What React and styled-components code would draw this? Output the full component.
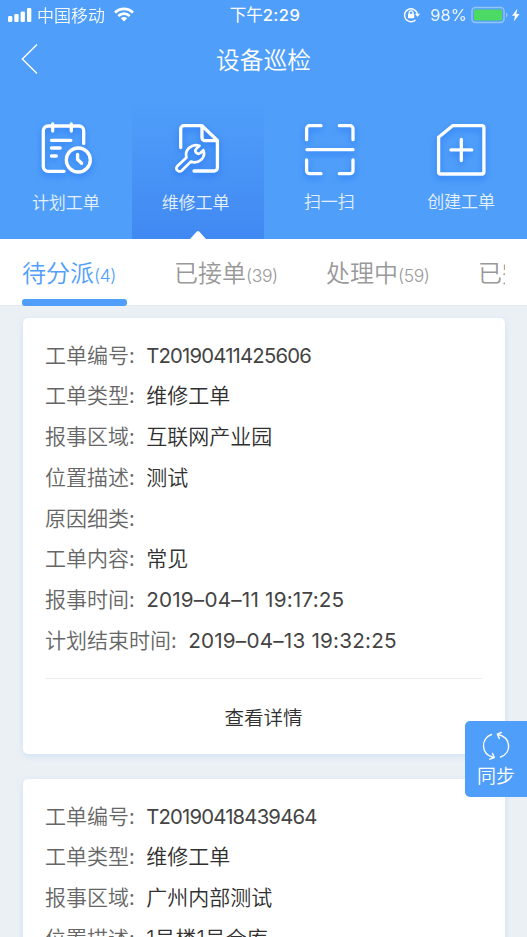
import React from 'react';
import styled, { createGlobalStyle } from 'styled-components';

const GlobalStyle = createGlobalStyle`
	* {
		box-sizing: border-box;
	}
	body {
		margin: 0;
		background: #ebf0f5;
		font-family: "Noto Sans CJK SC", sans-serif;
		font-weight: 350;
	}
`;
const Screen = styled.div`
	position: relative;
	width: 527px;
	height: 937px;
	overflow: hidden;
	background: #ebf0f5;
`;
const Header = styled.header`
	height: 239px;
	background: #4f9efa;
	color: #fff;
`;
const StatusBar = styled.div`
	display: grid;
	grid-template-columns: 1fr auto 1fr;
	align-items: center;
	height: 28px;
	padding: 0 7px 0 8px;
	font-size: 17px;
	line-height: 28px;
`;
const StatusGroup = styled.div`
	display: flex;
	align-items: center;
	justify-content: ${props => props.$end ? 'flex-end' : 'flex-start'};
	height: 28px;
`;
const Carrier = styled.span`
	margin: 0 9px 0 5px;
	opacity: 0.95;
`;
const Time = styled.span`
	padding-left: 2px;
	font-size: 16.5px;
	font-weight: 400;
`;
const Clock = styled.span`
	font-family: Inter, sans-serif;
	font-weight: 500;
	letter-spacing: 0.5px;
`;
const Percent = styled.span`
	margin: 0 4px 0 9px;
	font-family: Inter, sans-serif;
	font-size: 16.5px;
	font-weight: 400;
	opacity: 0.9;
`;
const NavBar = styled.div`
	display: grid;
	grid-template-columns: 60px 1fr 60px;
	align-items: center;
	height: 62px;
`;
const Back = styled.svg`
	margin-left: 20px;
`;
const Title = styled.h1`
	margin: 0;
	font-size: 23.7px;
	font-weight: 350;
	line-height: 62px;
	text-align: center;
`;
const Actions = styled.nav`
	display: grid;
	grid-template-columns: repeat(4, 1fr);
	height: 149px;
`;
const Action = styled.div`
	position: relative;
	display: flex;
	flex-direction: column;
	align-items: center;
	padding-top: 29px;
	background: ${props => props.$active ? 'linear-gradient(#4f9efa 8%, #4189f2)' : 'none'};
`;
const ActionLabel = styled.span`
	margin-top: ${props => props.$top}px;
	padding-right: ${props => props.$shift || 0}px;
	font-size: 17px;
	line-height: 24px;
	color: #e6f1ff;
`;
const Pointer = styled.svg`
	position: absolute;
	bottom: 0;
	left: 58px;
`;
const Glyph = styled.svg`
	width: 58px;
	height: 58px;
	overflow: visible;
	fill: none;
	stroke: #fff;
	stroke-width: 3.3;
	stroke-linecap: round;
	stroke-linejoin: round;
	filter: drop-shadow(0 3px 3px rgba(24, 108, 245, 0.65));
`;
const TabBar = styled.div`
	height: 67px;
	padding: 0 22px;
	background: #fff;
	border-bottom: 1px solid #e3e8ec;
`;
const TabList = styled.div`
	display: flex;
	gap: 47.5px;
	height: 67px;
	overflow: hidden;
`;
const Tab = styled.div`
	display: flex;
	flex-direction: column;
	flex: 0 0 104.5px;
	color: ${props => props.$active ? '#4f9efa' : '#999'};
`;
const TabText = styled.div`
	height: 60px;
	font-size: 24px;
	line-height: 66px;
	white-space: nowrap;
`;
const Underline = styled.div`
	height: 7px;
	border-radius: 3px;
	background: #4f9efa;
`;
const Count = styled.span`
	font-family: Inter, sans-serif;
	font-size: 17.5px;
	font-weight: 350;
	letter-spacing: -0.4px;
`;
const List = styled.main`
	display: flex;
	flex-direction: column;
	gap: 25px;
	padding: 12px 22.5px 0;
`;
const Card = styled.section`
	height: 436px;
	flex-shrink: 0;
	padding: 15.5px 22.5px 0;
	border-radius: 5px;
	background: #fff;
	box-shadow: 0 2px 6px rgba(160, 200, 245, 0.35);
`;
const Row = styled.div`
	display: flex;
	align-items: baseline;
	height: 40.75px;
	font-size: 21px;
	line-height: 40.75px;
	white-space: nowrap;
`;
const Label = styled.span`
	margin-right: 11.5px;
	color: #666;
`;
const Value = styled.span`
	color: #303030;
	font-family: Inter, "Noto Sans CJK SC", sans-serif;
`;
const CodeValue = styled(Value)`
	color: #444;
	font-size: 20.3px;
	font-weight: 400;
	letter-spacing: -0.8px;
`;
const DateValue = styled(CodeValue)`
	font-size: 20.7px;
	letter-spacing: 0.2px;
`;
const Detail = styled.div`
	margin-top: 18px;
	border-top: 1px solid #ececec;
	color: #303030;
	font-size: 19.5px;
	line-height: 75px;
	text-align: center;
`;
const Sync = styled.div`
	position: absolute;
	top: 721px;
	right: 0;
	display: flex;
	flex-direction: column;
	align-items: center;
	width: 62px;
	height: 76px;
	padding-top: 10px;
	border-radius: 5px 0 0 5px;
	background: #4f9efa;
	color: #fff;
	font-size: 19px;
	line-height: 28px;
`;

const PlanIcon = () => <Glyph viewBox="0 0 58 58">
	<path d="M27 52.3H11a4.7 4.7 0 0 1-4.7-4.7V11.7A4.7 4.7 0 0 1 11 7h31a4.7 4.7 0 0 1 4.7 4.7V24.5M15.7 5v7M34.3 5v7M14.5 21.3h19.3M14.5 29h8.7M14.5 37h4.8"/>
	<circle cx="41.3" cy="41" r="12"/>
	<path d="M40.6 35.5v5l4 3.8"/>
</Glyph>;

const RepairIcon = () => <Glyph viewBox="0 0 58 58">
	<path d="M11.7 28.5V10a3.3 3.3 0 0 1 3.3-3.3h18L48.4 21.5V48.7a3.3 3.3 0 0 1-3.3 3.3H25M33 7v11.7a3 3 0 0 0 3 3h12"/>
	<path strokeWidth="2.7" d="M30.4 26.8C24.5 24.2 15 29.5 17.5 38.5L8.2 47.2C5.8 50.5 9.8 54 12.9 51.5L21.8 42.6C29 45.3 37.4 39.2 34.3 31.2L31.4 34C28.4 36.3 24.8 32.5 27.2 29.9Z"/>
</Glyph>;

const ScanIcon = () => <Glyph viewBox="0 0 58 58">
	<path d="M21 6.7H9.6a3 3 0 0 0-3 3v11M39.3 6.7H50a3 3 0 0 1 3 3v11M6.6 41v10.7a3 3 0 0 0 3 3H21M53 41v10.7a3 3 0 0 1-3 3H39.3M7 30.7h46"/>
</Glyph>;

const CreateIcon = () => <Glyph viewBox="0 0 58 58">
	<path d="M20.6 6.7H50a1.9 1.9 0 0 1 1.9 1.9V53a2 2 0 0 1-2 2H8.6a2 2 0 0 1-2-2V18.3ZM29.3 20.5v21M19 30.9h20.8"/>
</Glyph>;

const SignalIcon = () => <svg width="24" height="16" viewBox="0 0 24 16" fill="#fff">
	<rect x="0" y="9" width="4.3" height="6" rx="1.2"/>
	<rect x="6.3" y="7" width="4.3" height="8" rx="1.2"/>
	<rect x="12.6" y="4.5" width="4.3" height="10.5" rx="1.2"/>
	<rect x="19" y="1" width="4.3" height="14" rx="1.2"/>
</svg>;

const WifiIcon = () => <svg width="20" height="15" viewBox="0 0 20 15" fill="none" stroke="#fff" strokeWidth="2.6">
	<path d="M1 5.6C6 .6 14 .6 19 5.6M4.3 9c3.3-3.2 8.1-3.2 11.4 0"/>
	<path d="M6.8 11.3c1.9-1.6 4.5-1.6 6.4 0L10 14.5Z" fill="#fff" stroke="none"/>
</svg>;

const LockIcon = () => <svg width="18" height="16" viewBox="0 0 18 16" fill="none" stroke="#fff" strokeWidth="1.4">
	<path d="M12.5 13A6.5 6.5 0 1 1 14.4 7"/>
	<path d="M12 6.8h5l-2.5 3.3Z" fill="#fff" stroke="none"/>
	<path d="M6.2 7V5.7a1.9 1.9 0 0 1 3.8 0V7" strokeWidth="1.2"/>
	<rect x="5" y="6.8" width="6.2" height="4.4" rx=".7" fill="#fff" stroke="none"/>
</svg>;

const BatteryIcon = () => <svg width="49" height="18" viewBox="0 0 49 18">
	<rect x="1" y="1.5" width="32" height="15" rx="3.5" fill="none" stroke="#94c4fc" strokeWidth="1.5"/>
	<rect x="3" y="3.5" width="28" height="11" rx="1.5" fill="#4cd964"/>
	<path d="M35 6.5c2 .8 2 4.2 0 5Z" fill="#94c4fc"/>
	<path d="M46.5 2.5L41 9.8h3L42.8 15.5L48.5 8h-3.2Z" fill="#fff"/>
</svg>;

const SyncIcon = () => <svg width="30" height="30" viewBox="0 0 30 30" fill="none" stroke="#fff" strokeWidth="1.4" strokeLinecap="round" strokeLinejoin="round">
	<path d="M10.5 3.500C-.5 7.500 -.5 23 12.500 26.500M8.800 28.200l4.500-1.700-1.800-4M19.500 26C31 22 30.500 6.500 16.500 3.300M20.300 1.500l-4 1.700 2 4.200"/>
</svg>;

const actions = [
	{ label: '计划工单', icon: <PlanIcon/>, top: 13 },
	{ label: '维修工单', icon: <RepairIcon/>, top: 13, shift: 4, active: true },
	{ label: '扫一扫', icon: <ScanIcon/>, top: 12 },
	{ label: '创建工单', icon: <CreateIcon/>, top: 12 },
];

const tabs = [
	{ label: '待分派', count: 4, active: true },
	{ label: '已接单', count: 39 },
	{ label: '处理中', count: 59 },
	{ label: '已完成' },
];

const orders = [
	[
		['工单编号', 'T20190411425606', CodeValue],
		['工单类型', '维修工单'],
		['报事区域', '互联网产业园'],
		['位置描述', '测试'],
		['原因细类', ''],
		['工单内容', '常见'],
		['报事时间', '2019–04–11 19:17:25', DateValue],
		['计划结束时间', '2019–04–13 19:32:25', DateValue],
	],
	[
		['工单编号', 'T20190418439464', CodeValue],
		['工单类型', '维修工单'],
		['报事区域', '广州内部测试'],
		['位置描述', '1号楼1号仓库'],
	],
];

export default () => {
	return <Screen>
		<GlobalStyle/>
		<Header>
			<StatusBar>
				<StatusGroup>
					<SignalIcon/>
					<Carrier>中国移动</Carrier>
					<WifiIcon/>
				</StatusGroup>
				<Time>下午<Clock>2:29</Clock></Time>
				<StatusGroup $end>
					<LockIcon/>
					<Percent>98%</Percent>
					<BatteryIcon/>
				</StatusGroup>
			</StatusBar>
			<NavBar>
				<Back width="20" height="32" viewBox="0 0 20 32" fill="none" stroke="#fff" strokeWidth="1.4">
					<path d="M17 1.500L2.300 16L17 30.500"/>
				</Back>
				<Title>设备巡检</Title>
			</NavBar>
			<Actions>
				{actions.map(item => <Action key={item.label} $active={item.active}>
					{item.icon}
					<ActionLabel $top={item.top} $shift={item.shift}>{item.label}</ActionLabel>
					{item.active && <Pointer width="16" height="9" viewBox="0 0 16 9" fill="#fff">
						<path d="M0 9L6.800 1.500Q8 .5 9.200 1.500L16 9Z"/>
					</Pointer>}
				</Action>)}
			</Actions>
		</Header>
		<TabBar>
			<TabList>
				{tabs.map(tab => <Tab key={tab.label} $active={tab.active}>
					<TabText>{tab.label}{tab.count && <Count>({tab.count})</Count>}</TabText>
					{tab.active && <Underline/>}
				</Tab>)}
			</TabList>
		</TabBar>
		<List>
			{orders.map((rows, index) => <Card key={index}>
				{rows.map(([label, value, Text = Value]) => <Row key={label}>
					<Label>{label}:</Label>
					<Text>{value}</Text>
				</Row>)}
				{index === 0 && <Detail>查看详情</Detail>}
			</Card>)}
		</List>
		<Sync>
			<SyncIcon/>
			同步
		</Sync>
	</Screen>;
}
